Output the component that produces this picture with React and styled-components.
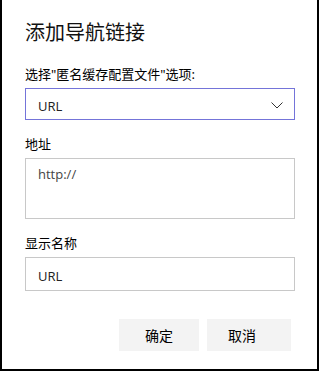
import React from "react";
import styled, { createGlobalStyle } from "styled-components";

const Global = createGlobalStyle`
  html, body { margin: 0; padding: 0; background: #ffffff; }
  #root { width: 319px; height: 371px; }
`;

const cjk = `"Noto Sans CJK SC", "Noto Sans", sans-serif`;
const latin = `"Open Sans", "Noto Sans CJK SC", sans-serif`;

const Dialog = styled.div`
  box-sizing: border-box;
  width: 319px;
  height: 371px;
  background: #ffffff;
  border: 2px solid #000000;
  border-top: none;
  padding: 18px 22px 0 23px;
  display: flex;
  flex-direction: column;
  font-family: ${cjk};
  color: #000000;
`;

const Title = styled.h1`
  margin: 0;
  font-size: 20px;
  line-height: 28px;
  font-weight: 400;
  color: #111111;
`;

const Label = styled.label`
  display: block;
  margin-top: ${(p) => p.$mt}px;
  font-size: 13px;
  line-height: 20px;
  color: #000000;
  font-family: "Noto Sans", "Noto Sans CJK SC", sans-serif;
`;

const Select = styled.div`
  box-sizing: border-box;
  margin-top: 4px;
  height: 32px;
  border: 1px solid #7474d9;
  display: flex;
  align-items: center;
  justify-content: space-between;
  padding: 3px 11px 0 12px;
  font-family: ${latin};
  font-size: 13px;
  color: #222222;
`;

const Chevron = () => (
  <svg width="12" height="7" viewBox="0 0 12 7" aria-hidden="true">
    <polyline points="0.5,0.5 6,6 11.5,0.5" fill="none" stroke="#333333" strokeWidth="1" />
  </svg>
);

const TextArea = styled.textarea`
  box-sizing: border-box;
  display: block;
  width: 100%;
  margin: 4px 0 0 0;
  height: 61px;
  border: 1px solid #c8c8c8;
  padding: 5px 12px;
  resize: none;
  outline: none;
  font-family: ${latin};
  font-size: 13px;
  line-height: 20px;
  color: #444444;
  background: #ffffff;
`;

const Input = styled.input`
  box-sizing: border-box;
  display: block;
  width: 100%;
  margin: 4px 0 0 0;
  height: 34px;
  border: 1px solid #c8c8c8;
  padding: 4px 12px 0 12px;
  outline: none;
  font-family: ${latin};
  font-size: 13px;
  color: #222222;
  background: #ffffff;
`;

const Actions = styled.div`
  margin-top: 28px;
  display: flex;
  justify-content: flex-end;
  gap: 8px;
  padding-right: 4px;
`;

const Button = styled.button`
  box-sizing: border-box;
  width: ${(p) => p.$w}px;
  height: 32px;
  border: none;
  background: #f3f3f3;
  font-family: ${cjk};
  font-size: 14px;
  color: #000000;
  text-align: ${(p) => (p.$pl ? "left" : "center")};
  padding: 0 0 0 ${(p) => p.$pl || 0}px;
  cursor: pointer;
`;

export default function App() {
  return (
    <>
      <Global />
      <Dialog>
        <Title>添加导航链接</Title>
        <Label $mt={18}>选择"匿名缓存配置文件"选项:</Label>
        <Select>
          <span>URL</span>
          <Chevron />
        </Select>
        <Label $mt={14}>地址</Label>
        <TextArea readOnly value="http://" />
        <Label $mt={14}>显示名称</Label>
        <Input readOnly value="URL" />
        <Actions>
          <Button $w={80}>确定</Button>
          <Button $w={84} $pl={21}>取消</Button>
        </Actions>
      </Dialog>
    </>
  );
}
